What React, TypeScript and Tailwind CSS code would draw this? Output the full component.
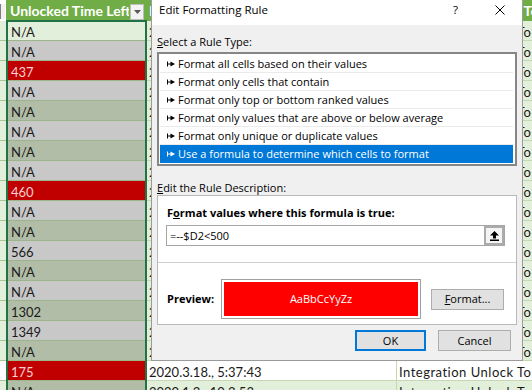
import React from "react";

type Fill = "green" | "gray" | "sage" | "red";

// column B values as they show in the sheet (selected column, conditional fill)
const cells: { v: string; fill: Fill }[] = [
  { v: "N/A", fill: "green" },
  { v: "N/A", fill: "gray" },
  { v: "437", fill: "red" },
  { v: "N/A", fill: "gray" },
  { v: "N/A", fill: "sage" },
  { v: "N/A", fill: "gray" },
  { v: "N/A", fill: "sage" },
  { v: "N/A", fill: "gray" },
  { v: "460", fill: "red" },
  { v: "N/A", fill: "gray" },
  { v: "N/A", fill: "sage" },
  { v: "566", fill: "gray" },
  { v: "N/A", fill: "sage" },
  { v: "N/A", fill: "gray" },
  { v: "1302", fill: "sage" },
  { v: "1349", fill: "gray" },
  { v: "N/A", fill: "sage" },
  { v: "175", fill: "red" },
  { v: "N/A", fill: "sage" },
];

const dates = [
  "2020.2.10., 8:14:02",
  "2020.2.11., 9:01:17",
  "2020.3.12., 6:22:40",
  "2020.2.12., 11:45:09",
  "2020.2.13., 7:33:51",
  "2020.2.14., 10:08:26",
  "2020.2.17., 12:19:44",
  "2020.2.18., 8:51:30",
  "2020.3.13., 5:02:11",
  "2020.2.19., 9:27:58",
  "2020.2.20., 14:03:36",
  "2020.3.21., 6:40:12",
  "2020.2.24., 10:55:07",
  "2020.2.25., 8:36:48",
  "2020.4.6., 13:12:20",
  "2020.4.7., 9:48:03",
  "2020.2.27., 11:21:39",
  "2020.3.18., 5:37:43",
  "2020.1.3., 10:3:53",
];

const fillClass: Record<Fill, string> = {
  green: "bg-[#e2efda] text-[#1a1a1a]",
  gray: "bg-[#c8c8c8] text-[#1a1a1a]",
  sage: "bg-[#b1bda7] text-[#1a1a1a]",
  red: "bg-[#c00000] text-[#f8d0d0]",
};

const ruleTypes = [
  "Format all cells based on their values",
  "Format only cells that contain",
  "Format only top or bottom ranked values",
  "Format only values that are above or below average",
  "Format only unique or duplicate values",
  "Use a formula to determine which cells to format",
];

function RuleArrow() {
  return (
    <svg width="8" height="6" viewBox="0 0 8 6" className="mr-[3px] shrink-0">
      <path d="M0.5 0.5V5.5M0.5 3H4" stroke="currentColor" strokeWidth="1" />
      <path d="M3.5 0.5L8 3L3.5 5.5Z" fill="currentColor" />
    </svg>
  );
}

function Sheet() {
  return (
    <div className="flex flex-col">
      <div className="flex h-[21px] text-[14px]">
        <div className="w-[6px] shrink-0 bg-white pt-[4px]">
          <div className="h-[15px] w-[5px] border-l border-[#7f7f7f] bg-[#f2f2f2]" />
        </div>
        <div className="flex w-[141px] shrink-0 items-start bg-[#70ad47] pl-[4px] pr-[3px]">
          <span className="min-w-0 flex-1 self-end overflow-hidden whitespace-nowrap pb-[2px] font-bold leading-[16px] text-white">
            Unlocked Time Left
          </span>
          <div className="ml-[1px] mt-[4px] flex h-[16px] w-[14px] shrink-0 items-center justify-center border border-[#bdbdbd] bg-[#f3f3f3]">
            <svg width="7" height="4" viewBox="0 0 7 4">
              <path d="M0 0H7L3.5 4Z" fill="#595959" />
            </svg>
          </div>
        </div>
        <div className="flex w-[250px] shrink-0 items-end bg-[#70ad47] pb-[2px] pl-[2px] font-bold leading-[16px] text-white">
          Last Unlock Time
        </div>
        <div className="flex min-w-0 flex-1 items-end overflow-hidden whitespace-nowrap bg-[#70ad47] pb-[2px] pl-[2px] font-bold leading-[16px] tracking-[0.3px] text-white">
          Integration Unlock Token
        </div>
      </div>
      {cells.map((c, i) => {
        const band = i === 17 ? "bg-white" : "bg-[#e2efda]";
        return (
          <div key={i} className="flex h-[20px] leading-[16px]">
            <div className={`w-[6px] shrink-0 border-b border-[#a9c596] ${band}`} />
            <div
              className={`flex w-[141px] shrink-0 items-end border-b border-[#9cb68a] pl-[5px] ${fillClass[c.fill]}`}
            >
              {c.v}
            </div>
            <div
              className={`flex w-[250px] shrink-0 items-end border-b border-r border-[#c3d8b3] pl-[2px] text-[#1a1a1a] ${band}`}
            >
              {dates[i]}
            </div>
            <div
              className={`flex min-w-0 flex-1 items-end overflow-hidden whitespace-nowrap border-b border-[#c3d8b3] pl-[2px] tracking-[0.5px] text-[#1a1a1a] ${band}`}
            >
              Integration Unlock Token
            </div>
          </div>
        );
      })}
    </div>
  );
}

function Dialog() {
  return (
    <div className="absolute left-[151px] top-0 w-[372px] border-x border-b border-[#9b9b9b] bg-[#f0f0f0] font-['Open_Sans',sans-serif] text-[11px] text-black">
      <div className="flex h-[25px] items-start bg-white pl-[7px] pr-[17px] pt-[3px]">
        <span className="text-[11.5px] leading-[14px]">Edit Formatting Rule</span>
        <span className="ml-auto text-[11.5px] leading-[14px]">?</span>
        <svg width="10" height="10" viewBox="0 0 10 10" className="ml-[37px] mt-[2px]">
          <path d="M0.5 0.5L9.5 9.5M9.5 0.5L0.5 9.5" stroke="#000" strokeWidth="1" />
        </svg>
      </div>

      <div className="px-[5px] pb-[9px] pt-[10px]">
        <div className="leading-[14px]">
          <u>S</u>elect a Rule Type:
        </div>
        <div className="mt-[3px] border-2 border-[#868686] bg-white p-px pr-[2px]">
          {ruleTypes.map((t, i) => (
            <div
              key={t}
              className={`flex h-[18px] items-center whitespace-nowrap pl-[7px] leading-[18px] ${
                i === 5 ? "bg-[#0078d7] text-white" : "border-b border-[#ebebeb]"
              }`}
            >
              <RuleArrow />
              {t}
            </div>
          ))}
        </div>

        <div className="mt-[15px] leading-[14px]">
          <u>E</u>dit the Rule Description:
        </div>
        <div className="border border-[#b9b9b9] bg-white pb-[5px] pt-[10px]">
          <div className="pl-[9px] font-bold leading-[14px]">
            F<u>o</u>rmat values where this formula is true:
          </div>
          <div className="ml-[8px] mt-[5px] flex h-[21px] w-[339px] items-center border border-[#a6a6a6] pl-[3px]">
            <span className="flex-1 leading-[14px]">{"=--$D2<500"}</span>
            <div className="flex h-[19px] w-[20px] items-center justify-center border-2 border-[#ababab] bg-[#f4f4f4]">
              <svg width="9" height="10" viewBox="0 0 9 10">
                <path d="M4.5 0L9 4.5H6V7.5H3V4.5H0Z" fill="#000" />
                <rect x="0" y="8.5" width="9" height="1.5" fill="#000" />
              </svg>
            </div>
          </div>
          <div className="mt-[16px] h-px bg-[#cfcfcf]" />
          <div className="mt-[16px] flex items-center">
            <div className="w-[63px] pl-[9px] font-bold leading-[14px]">Preview:</div>
            <div className="h-[40px] w-[200px] border border-[#a0a0a0] bg-white p-[2px]">
              <div className="flex h-full items-center justify-center bg-[#ff0000] text-white">
                AaBbCcYyZz
              </div>
            </div>
            <button className="ml-[10px] h-[21px] w-[73px] border border-[#adadad] bg-[#e1e1e1] leading-[14px]">
              <u>F</u>ormat...
            </button>
          </div>
        </div>

        <div className="mt-[5px] flex justify-end gap-[12px] pr-[6px]">
          <button className="h-[21px] w-[71px] border-2 border-[#0078d7] bg-[#e1e1e1] leading-[14px]">
            OK
          </button>
          <button className="h-[21px] w-[73px] border border-[#adadad] bg-[#e1e1e1] leading-[14px]">
            Cancel
          </button>
        </div>
      </div>
    </div>
  );
}

export default function App() {
  return (
    <div className="relative h-[390px] w-[532px] overflow-hidden bg-white font-['Lato',sans-serif] text-[13px]">
      <Sheet />
      {/* selection outline of the column */}
      <div className="pointer-events-none absolute left-[6px] top-[20px] h-[400px] w-[141px] border-2 border-[#217346]" />
      <Dialog />
    </div>
  );
}
